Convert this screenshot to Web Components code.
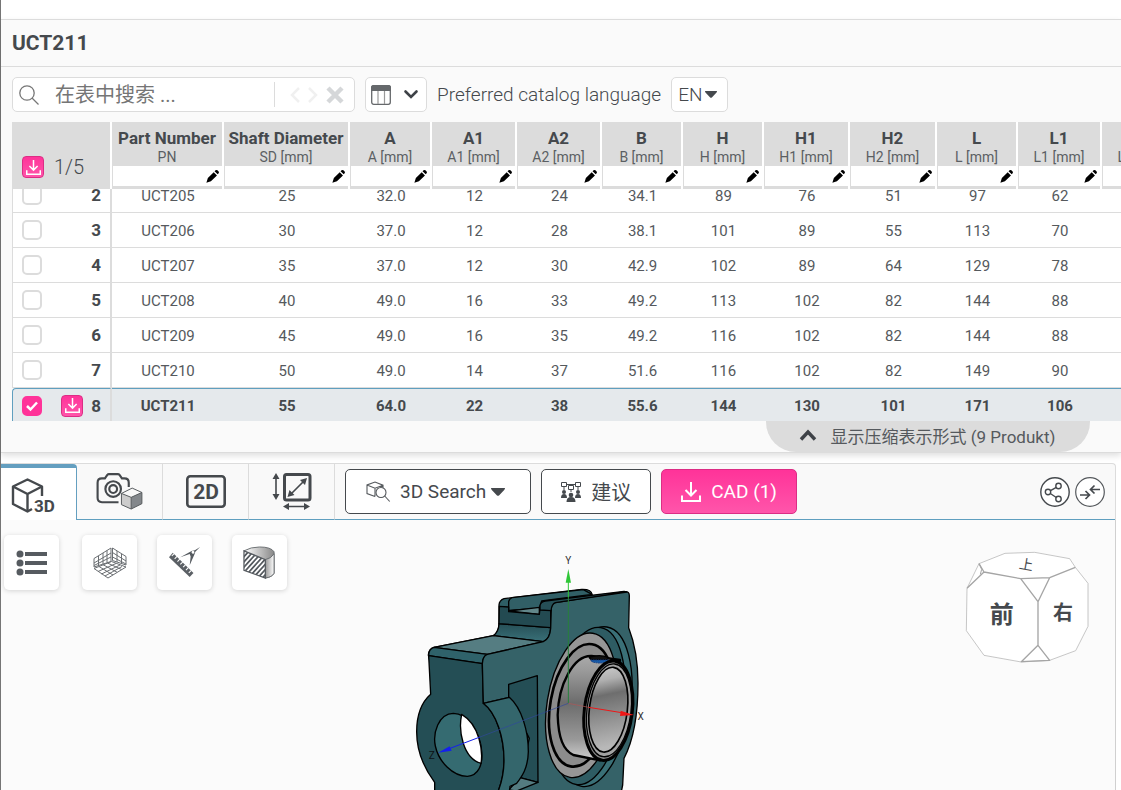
<!DOCTYPE html>
<html lang="zh-CN">
<head>
<meta charset="utf-8">
<meta name="viewport" content="width=device-width, initial-scale=1">
<title>UCT211</title>
<style>
html, body { height: 100%; }
body {
  margin: 0;
  background: #fff;
  color: #45494d;
  font-family: Roboto, "Noto Sans CJK SC", sans-serif;
  overflow: hidden;
}
</style>
</head>
<body>
<part-page>
  <part-panel heading="UCT211">
    <table-toolbar></table-toolbar>
    <part-table></part-table>
    <panel-toggle>显示压缩表示形式 (9 Produkt)</panel-toggle>
  </part-panel>
  <view-bar></view-bar>
  <model-stage></model-stage>
</part-page>

<script>
// Icons, shared by every component. [viewBox, markup]
const ICONS = {
  search: ['0 0 20 20', '<g fill="none" stroke="#777" stroke-width="1.3"><circle cx="8" cy="8" r="7.2"/><path d="M13 13l6.5 6.5"/></g>'],
  prev: ['0 0 10 18', '<path d="M9 2L2 9l7 7" fill="none" stroke="#f0f0f0" stroke-width="2.5"/>'],
  next: ['0 0 10 18', '<path d="M1 2l7 7-7 7" fill="none" stroke="#f0f0f0" stroke-width="2.5"/>'],
  clear: ['0 0 18 18', '<path d="M2 2l14 14M16 2L2 16" stroke="#d5d7d9" stroke-width="4.500"/>'],
  columns: ['0 0 20 20', '<rect x=".7" y=".7" width="18.6" height="18.6" rx="2" fill="#fff" stroke="#65686b" stroke-width="1.3"/><path d="M0 6V2.500Q0 0 2.500 0h15Q20 0 20 2.500V6z" fill="#65686b"/><path d="M7 6v13M13.500 6v13" stroke="#999" stroke-width="1.2"/>'],
  down: ['0 0 14 10', '<path d="M1.500 1.500L7 7l5.500-5.500" fill="none" stroke="#3e4247" stroke-width="2.600" stroke-linecap="round"/>'],
  up: ['0 0 18 12', '<path d="M2 10.500L9 3l7 7.500" fill="none" stroke="#3e4247" stroke-width="3.400"/>'],
  caret: ['0 0 14 8', '<path d="M0 0h14q0 1.200-.8 2L8 7.400q-1 .8-2 0L.8 2Q0 1.200 0 0z" fill="#45494d"/>'],
  download: ['0 0 20 20', '<path d="M10 0v13M4.500 8L10 13.500 15.500 8M1 13.500V19h18v-5.500" fill="none" stroke="#fff" stroke-width="2"/>'],
  pencil: ['0 0 14 14', '<path d="M8.300 2.300l3.500 3.500-6.500 6.400-4.900 1.600L2 8.700zM9.200 1.400L10.300.4q1-.8 2 0l1.300 1.300q.8.900 0 1.900l-1 1.100z"/>'],
  cube3d: ['0 0 44 36', '<g fill="none" stroke="#45494d" stroke-width="2.400" stroke-linejoin="round"><path d="M31 18V8.500L16.500 1.500 2 8.500V26l14.500 7.500L21 31"/><path d="M2 8.500L16.500 16 31 8.500M16.500 16v17"/></g><text x="23" y="34" font-size="17" font-weight="700" fill="#45494d">3D</text>'],
  camera: ['0 0 48 38', '<g fill="none" stroke="#45494d" stroke-width="2.200"><path d="M23 30H6q-4.500 0-4.500-4.500V10Q1.500 5.500 6 5.500h3L11.500 2q.6-.8 1.700-.8h9q1.200 0 1.800.8l2.500 3.500h2.500q4.500 0 4.500 4.500v4.500"/><circle cx="17.500" cy="16.500" r="8"/><circle cx="17.500" cy="16.500" r="4"/></g><path d="M26 21l11-5.500L47 20 36 25z" fill="#f7f7f7"/><path d="M26 21l10 4v12l-10-4.500z" fill="#ccc"/><path d="M36 25l11-5v11.500L36 37z" fill="#83878b"/><path d="M26 21l11-5.500L47 20v11.500L36 37l-10-4.500zM26 21l10 4 11-5M36 25v12" fill="none" stroke="#55595d"/>'],
  view2d: ['0 0 40 33', '<rect x="1.300" y="1.300" width="37.400" height="30.400" rx="3" fill="none" stroke="#45494d" stroke-width="2.600"/><text x="20" y="24" font-size="21" font-weight="700" text-anchor="middle" fill="#45494d">2D</text>'],
  dims: ['0 0 40 37', '<g fill="none" stroke="#45494d"><rect x="12.500" y="1.500" width="25.500" height="25.500" rx="2" stroke-width="3"/><path d="M17.500 22.500L33 7M4 5v18M16 33.500h19" stroke-width="1.600"/></g><path d="M35 5l-2 7-5-5zM15.500 24l2-7 5 5zM.5 6L4 0l3.500 6zM.5 21L4 27l3.500-6zM17 30l-6 3.500 6 3.500zM32 30l6 3.500-6 3.500z" fill="#45494d"/>'],
  search3d: ['0 0 24 22', '<g fill="none" stroke="#55595d" stroke-width="1.100"><path d="M9 15.500L1 12.500V4l8-3 8 3.200v3M1 4l8 3.200L17 4.200M9 7.200v8.300"/><circle cx="15" cy="11.500" r="5"/><path d="M18.700 15l5 5.500"/></g>'],
  people: ['0 0 20 20', '<g fill="none" stroke="#45494d"><path d="M.5.5h5v4h-5zM14.500.5h5v4h-5zM7.500 3.500h5v4h-5zM5.500 2.500h9M3 5v3M17 5v3M10 8v2"/></g><g fill="#45494d"><circle cx="3" cy="10" r="2"/><path d="M0 16q0-4 3-4t3 4z"/><circle cx="17" cy="10" r="2"/><path d="M14 16q0-4 3-4t3 4z"/><circle cx="10" cy="13" r="2.300"/><path d="M5.500 20q0-5 4.500-5t4.500 5z"/></g>'],
  share: ['0 0 30 30', '<circle cx="15" cy="15" r="14.200" fill="#fff" stroke="#45494d" stroke-width="1.400"/><g fill="none" stroke="#45494d" stroke-width="1.400"><circle cx="8" cy="15" r="2.700"/><circle cx="18.500" cy="9" r="2.700"/><circle cx="18.500" cy="22" r="2.700"/><path d="M10.500 13.700l5.800-3.300M10.300 16.500l6 4"/></g>'],
  collapse: ['0 0 30 30', '<circle cx="15" cy="15" r="14.300" fill="#fff" stroke="#55595d" stroke-width="1.200"/><path d="M5 18h9M10.500 14l4 4-4 4M25 12.500h-9M19.500 8.500l-4 4 4 4" fill="none" stroke="#45494d" stroke-width="1.700"/>'],
  list: ['0 0 32 26', '<g fill="#565b60"><circle cx="4" cy="4" r="3.500"/><circle cx="4" cy="13" r="3.500"/><circle cx="4" cy="22" r="3.500"/><path d="M9 2h22v4H9zM9 11h22v4H9zM9 20h22v4H9z"/></g>'],
  grid: ['0 0 34 32', '<g fill="none" stroke="#6a6e72"><path d="M1 11.500L18 1v13.500L1 20zM5.500 9v9.500M10 6v11M14 3.500v12M1 16L18 6M18 10L1 18.500M19.500 1L33 9.500V18l-13.500-4.500zM24 4v11M28.500 7v9.500M19.500 5.500L33 14M19.500 10L33 17"/><path d="M1 21.500L18.500 14.500 33 20 15 31zM6 19.500l14 8.500M10 17.700l14 7.500M14.500 16l14 6.500M5 24.500l18-8M8.500 27l18.500-9M12 29l17-9.500"/></g>'],
  measure: ['0 0 34 34', '<path d="M4 6l22 21.500-4 4.500L0 11z" fill="#5b6065"/><path d="M5.500 7l-2.500 2.500M8.500 10L6 12.500M11.500 13L9 15.500M14.500 16L12 18.500M17.500 19L15 21.500M20.500 22L18 24.500M23.500 25L21 27.500" stroke="#fff" stroke-width="1.100"/><path d="M33 0l-5.500 3.500-3 .5L12 11l10-3.500 1 2.500-1 9.500 5-11.500 1-3zM24 5.500a1.500 1.500 0 1 1 0 .1z" fill="#565b60" fill-rule="evenodd"/>'],
  section: ['0 0 34 34', '<defs><linearGradient id="sg"><stop stop-color="#fff"/><stop offset="1" stop-color="#888"/></linearGradient><linearGradient id="se"><stop stop-color="#999"/><stop offset="1" stop-color="#fff"/></linearGradient><pattern id="sh" width="3.600" height="3.600" patternUnits="userSpaceOnUse" patternTransform="rotate(42)"><path d="M0 0v4" stroke="#565b60" stroke-width="3.600"/></pattern></defs><path d="M1 5Q8 1 17 1q12 0 15 5v22q-2 4-9 5z" fill="url(#sg)" stroke="#6a6e72"/><path d="M23 14q6-1 9-6v20q-2 4-9 5z" fill="url(#se)" stroke="#6a6e72"/><path d="M1 5l22 9v19L1 25z" fill="#fff"/><path d="M1 5l22 9v19L1 25z" fill="url(#sh)" stroke="#565b60" stroke-width="1.300"/>']
};

class UiIcon extends HTMLElement {
  connectedCallback() {
    const [box, body] = ICONS[this.getAttribute('name')];
    const [, , w, h] = box.split(' ');
    const width = this.getAttribute('width') || w;
    const root = this.shadowRoot || this.attachShadow({ mode: 'open' });
    root.innerHTML = `
      <style>
        :host { display: inline-flex; flex: none; }
        svg { display: block; overflow: visible; }
      </style>
      <svg width="${width}" height="${Math.round(width * h / w)}" viewBox="${box}" aria-hidden="true">${body}</svg>`;
  }
}
customElements.define('ui-icon', UiIcon);

// Base for elements whose markup is static.
class ShadowElement extends HTMLElement {
  constructor() {
    super();
    const tpl = document.createElement('template');
    tpl.innerHTML = this.constructor.markup;
    this.attachShadow({ mode: 'open' }).appendChild(tpl.content.cloneNode(true));
  }
}

customElements.define('part-page', class extends ShadowElement {
  static markup = `
<style>
:host {
  display: flex;
  flex-direction: column;
  height: 100vh;
  box-sizing: border-box;
  padding-top: 19px;
  border-left: 1px solid #757575;
}
</style>
<slot></slot>`;
});

customElements.define('part-panel', class extends ShadowElement {
  static markup = `
<style>
:host {
  display: block;
  flex: none;
  background: #fafafa;
  border-top: 1px solid #dcdcdc;
  border-bottom: 1px solid #dcdcdc;
  box-shadow: 0 3px 6px rgba(0,0,0,0.12);
}
h1 {
  margin: 0;
  padding: 0 11px;
  font-size: 21px;
  line-height: 46px;
  font-weight: 700;
  border-bottom: 1px solid #dcdcdc;
}
</style>
<h1></h1>
<slot></slot>`;
  connectedCallback() {
    this.shadowRoot.querySelector('h1').textContent = this.getAttribute('heading');
  }
});

customElements.define('table-toolbar', class extends ShadowElement {
  static markup = `
<style>
:host {
  display: flex;
  align-items: center;
  gap: 10px;
  padding: 10px 11px;
}
.box {
  display: flex;
  align-items: center;
  box-sizing: border-box;
  height: 35px;
  border: 1px solid #dcdcdc;
  border-radius: 5px;
  background: #fff;
}
.search { width: 343px; padding: 0 10px 0 6px; }
input {
  flex: 1;
  min-width: 0;
  margin-left: 16px;
  padding: 0;
  border: 0;
  outline: 0;
  background: none;
  font: inherit;
  font-size: 20px;
  color: inherit;
}
input::placeholder { color: #757575; }
.steps {
  display: flex;
  align-items: center;
  gap: 8px;
  height: 25px;
  padding-left: 15px;
  border-left: 1px solid #dcdcdc;
}
button {
  display: flex;
  padding: 0;
  border: 0;
  background: none;
}
button.box { gap: 13px; width: 62px; padding: 0 5px; border: 1px solid #dcdcdc; background: #fff; }
label { font-size: 19px; font-weight: 300; }
.lang { position: relative; }
.lang ui-icon { position: absolute; right: 10px; pointer-events: none; }
select {
  appearance: none;
  width: 55px;
  height: 33px;
  padding: 0 6px;
  border: 0;
  background: none;
  color: inherit;
  font: inherit;
  font-size: 19px;
  font-weight: 300;
}
</style>
<div class="box search">
  <ui-icon name="search"></ui-icon>
  <input type="text" placeholder="在表中搜索 ..." aria-label="在表中搜索">
  <div class="steps">
    <button aria-label="prev"><ui-icon name="prev"></ui-icon></button>
    <button aria-label="next"><ui-icon name="next"></ui-icon></button>
    <button aria-label="clear"><ui-icon name="clear"></ui-icon></button>
  </div>
</div>
<button class="box" aria-label="columns"><ui-icon name="columns"></ui-icon><ui-icon name="down"></ui-icon></button>
<label for="lang">Preferred catalog language</label>
<div class="box lang">
  <select id="lang"><option>EN</option></select>
  <ui-icon name="caret" width="12"></ui-icon>
</div>`;
});

const COLUMNS = [
  ['Part Number', 'PN', 112], ['Shaft Diameter', 'SD [mm]', 126], ['A', 'A [mm]', 82],
  ['A1', 'A1 [mm]', 85], ['A2', 'A2 [mm]', 85], ['B', 'B [mm]', 81], ['H', 'H [mm]', 81],
  ['H1', 'H1 [mm]', 86], ['H2', 'H2 [mm]', 87], ['L', 'L [mm]', 81], ['L1', 'L1 [mm]', 84],
  ['L2', 'L2 [mm]', 84]
];
const ROWS = [
  [2, 'UCT205', '25', '32.0', '12', '24', '34.1', '89', '76', '51', '97', '62'],
  [3, 'UCT206', '30', '37.0', '12', '28', '38.1', '101', '89', '55', '113', '70'],
  [4, 'UCT207', '35', '37.0', '12', '30', '42.9', '102', '89', '64', '129', '78'],
  [5, 'UCT208', '40', '49.0', '16', '33', '49.2', '113', '102', '82', '144', '88'],
  [6, 'UCT209', '45', '49.0', '16', '35', '49.2', '116', '102', '82', '144', '88'],
  [7, 'UCT210', '50', '49.0', '14', '37', '51.6', '116', '102', '82', '149', '90'],
  [8, 'UCT211', '55', '64.0', '22', '38', '55.6', '144', '130', '101', '171', '106']
];
const SELECTED = 8;

customElements.define('part-table', class extends ShadowElement {
  static markup = `
<style>
:host {
  display: block;
  height: 299px;
  margin-left: 11px;
  overflow: auto;
  scrollbar-width: none;
}
table {
  table-layout: fixed;
  width: 0;
  border-collapse: separate;
  border-spacing: 0;
  font-size: 15px;
}
th, td { padding: 0; box-sizing: border-box; text-align: center; }
thead th {
  position: sticky;
  top: 0;
  z-index: 1;
  height: 67px;
  background: #dcdcdc;
  border-right: 2px solid #fff;
  vertical-align: bottom;
}
.name { font-size: 17px; line-height: 20px; font-weight: 700; white-space: nowrap; }
.unit { font-size: 14px; line-height: 18px; font-weight: 400; white-space: nowrap; color: #5b5f63; }
.filter { display: block; position: relative; margin: 0 0 3px 1px; }
.filter input {
  display: block;
  box-sizing: border-box;
  width: 100%;
  height: 20px;
  padding: 0 20px 0 4px;
  border: 0;
  font: inherit;
}
.filter ui-icon { position: absolute; right: 3px; top: 4px; color: #000; }
.count, .tools { display: flex; align-items: center; }
.count { gap: 10px; padding: 0 10px 11px; font-size: 20px; line-height: 22px; font-weight: 300; }
tbody th, tbody td { height: 35px; border-bottom: 1px solid #dcdcdc; background: #fff; }
tbody td { padding-top: 2px; color: #55595d; }
tbody tr.selected td { padding-top: 0; }
tbody th { border-left: 1px solid #dcdcdc; border-right: 2px solid #dcdcdc; font-size: 17px; }
.tools { justify-content: space-between; padding: 0 9px; line-height: 22px; }
.num { display: flex; gap: 8px; }
input[type=checkbox] {
  appearance: none;
  box-sizing: border-box;
  width: 20px;
  height: 20px;
  margin: 0;
  border: 2px solid #dcdcdc;
  border-radius: 5px;
  background: #fff;
}
input[type=checkbox]:checked {
  border-color: #ff3399;
  background: #ff3399;
}
.check { display: grid; align-items: center; justify-items: center; }
.check > * { grid-area: 1 / 1; }
.check svg { z-index: 0; pointer-events: none; }
.get {
  display: flex;
  align-items: center;
  justify-content: center;
  box-sizing: border-box;
  width: 22px;
  height: 22px;
  padding: 0;
  border: 1px solid #dc2d85;
  border-radius: 4px;
  background: linear-gradient(#ff3399, #ff55aa);
}
.selected th, .selected td {
  background: #e5e9ec;
  border-top: 1px solid #5f9fbf;
  font-weight: 700;
  color: #45494d;
}
.selected th { border-left-color: #5f9fbf; border-top-left-radius: 4px; }
</style>
<table>
  <colgroup></colgroup>
  <thead><tr></tr></thead>
  <tbody></tbody>
</table>`;
  connectedCallback() {
    const $ = s => this.shadowRoot.querySelector(s);
    const get = '<button class="get" aria-label="CAD"><ui-icon name="download" width="15"></ui-icon></button>';
    const tick = '<svg width="14" height="12" viewBox="0 0 14 12"><path d="M2 6l3.500 3.500L12 2.500" fill="none" stroke="#fff" stroke-width="2.500"/></svg>';
    $('colgroup').innerHTML = '<col style="width:100px">' +
      COLUMNS.map(c => `<col style="width:${c[2]}px">`).join('');
    $('thead tr').innerHTML = `<th><div class="count">${get}1/5</div></th>` +
      COLUMNS.map(([name, unit]) => `
        <th><div class="name">${name}</div><div class="unit">${unit}</div>
        <label class="filter"><input type="text" aria-label="${name}"><ui-icon name="pencil" width="13"></ui-icon></label></th>`).join('');
    $('tbody').innerHTML = ROWS.map(([n, ...cells]) => {
      const on = n === SELECTED;
      return `<tr${on ? ' class="selected"' : ''}>
        <th><div class="tools">
          <label class="check"><input type="checkbox" aria-label="${n}"${on ? ' checked' : ''}>${on ? tick : ''}</label>
          <span class="num">${on ? get : ''}${n}</span>
        </div></th>
        ${cells.map(c => `<td>${c}</td>`).join('')}<td></td></tr>`;
    }).join('');
    this.scrollTop = 11;
  }
});

customElements.define('panel-toggle', class extends ShadowElement {
  static markup = `
<style>
:host { display: flex; justify-content: flex-end; padding-right: 31px; }
button {
  display: flex;
  align-items: center;
  justify-content: center;
  gap: 14px;
  width: 324px;
  height: 31px;
  padding: 0 2px 3px 0;
  border: 0;
  border-radius: 0 0 30px 30px;
  background: #dcdcdc;
  color: #55595d;
  font: inherit;
  font-size: 17px;
}
</style>
<button><ui-icon name="up"></ui-icon><span><slot></slot></span></button>`;
});

customElements.define('view-bar', class extends ShadowElement {
  static markup = `
<style>
:host {
  display: flex;
  flex: none;
  box-sizing: border-box;
  height: 57px;
  margin: 10px 5px 0 0;
  border-top: 1px solid #dcdcdc;
  border-right: 1px solid #dcdcdc;
  border-top-right-radius: 4px;
  background: #f9f9f9;
}
button { font: inherit; color: inherit; }
.tab {
  display: flex;
  align-items: center;
  justify-content: center;
  box-sizing: border-box;
  width: 86px;
  padding: 0;
  border: 0;
  border-right: 1px solid #dcdcdc;
  border-bottom: 1px solid #5f9fbf;
  background: none;
}
.tab.active {
  width: 76px;
  justify-content: flex-start;
  padding: 3px 0 0 10px;
  border-top: 4px solid #649fc0;
  border-right: 1px solid #649fc0;
  border-bottom: 0;
  border-top-right-radius: 4px;
  background: #fff;
}
.actions {
  display: flex;
  flex: 1;
  align-items: center;
  gap: 10px;
  padding: 0 10px;
  border-bottom: 1px solid #5f9fbf;
}
.action {
  display: flex;
  align-items: center;
  justify-content: center;
  gap: 10px;
  box-sizing: border-box;
  height: 45px;
  padding: 0 19px;
  border: 1px solid #45494d;
  border-radius: 5px;
  background: #fff;
  font-size: 20px;
  font-weight: 400;
  white-space: nowrap;
}
.action.find { gap: 5px; padding: 0 25px 0 20px; font-size: 19px; }
.find span { padding-left: 5px; }
.action.cad {
  border-color: #dc2d85;
  background: linear-gradient(#ff3399, #ff55aa);
  color: #fff;
  font-size: 19px;
}
.round { display: flex; padding: 0; border: 0; background: none; }
.tools { display: flex; gap: 5px; margin-left: auto; }
</style>
<button class="tab active" aria-label="3D"><ui-icon name="cube3d"></ui-icon></button>
<button class="tab" aria-label="photo"><ui-icon name="camera" width="47"></ui-icon></button>
<button class="tab" aria-label="2D"><ui-icon name="view2d"></ui-icon></button>
<button class="tab" aria-label="size"><ui-icon name="dims"></ui-icon></button>
<div class="actions">
  <button class="action find"><ui-icon name="search3d"></ui-icon><span>3D Search</span><ui-icon name="caret"></ui-icon></button>
  <button class="action"><ui-icon name="people"></ui-icon><span>建议</span></button>
  <button class="action cad"><ui-icon name="download"></ui-icon><span>CAD (1)</span></button>
  <div class="tools">
    <button class="round" aria-label="share"><ui-icon name="share"></ui-icon></button>
    <button class="round" aria-label="collapse"><ui-icon name="collapse"></ui-icon></button>
  </div>
</div>`;
});

// Pillow block housing with its bearing insert, and the axis triad.
customElements.define('part-model', class extends ShadowElement {
  static markup = `
<style>
:host { display: block; width: 260px; }
svg { display: block; width: 100%; overflow: visible; }
</style>
<svg viewBox="0 0 780 735" role="img" aria-label="UCT211">
  <defs>
    <linearGradient id="steel" x1="0" y1="0" x2="0" y2="1">
      <stop offset="0" stop-color="#aaa"/><stop offset=".15" stop-color="#999"/>
      <stop offset=".45" stop-color="#6c6c6c"/><stop offset=".8" stop-color="#999"/><stop offset="1" stop-color="#d0d0d0"/>
    </linearGradient>
    <linearGradient id="bore" x1="0" y1="0" x2=".15" y2="1">
      <stop offset="0" stop-color="#d0d0d0"/><stop offset=".2" stop-color="#b0b0b0"/><stop offset=".38" stop-color="#6e6e6e"/>
      <stop offset=".6" stop-color="#888"/><stop offset="1" stop-color="#b8b8b8"/>
    </linearGradient>
    <linearGradient id="fillet" x1="0" y1="0" x2="0" y2="1">
      <stop offset="0" stop-color="#264f56"/><stop offset="1" stop-color="#397078"/>
    </linearGradient>
  </defs>
  <g stroke="#000" stroke-width="4" stroke-linejoin="round">
    <path d="M85 330Q86 312 102 307L280 272Q296 264 297 240V180Q298 166 312 161L545 133Q574 132 576 148L560 170 300 400 90 350z" fill="#2e5e65"/>
    <path d="M326 196V170Q328 161 336 158L550 134 576 148 425 168 418 190z" fill="#315f66"/>
    <path d="M326 198L418 187V208z" fill="#62878a"/>
    <path d="M297 236L452 248Q451 280 430 290L280 272Q296 260 297 236z" fill="url(#fillet)"/>
    <path d="M298 184L326 186V200L418 208 420 190 452 194V248L297 236z" fill="#234a51"/>
    <path d="M102 307L280 272 430 290 262 328z" fill="#557d82"/>
    <path d="M102 307L262 328Q248 336 247 356L86 332Q86 311 102 307z" fill="#2f626a"/>
    <path d="M86 332L247 356 250 475C290 505 312 580 312 645 312 690 300 725 294 740H104V712Q50 640 50 560 50 485 92 448z" fill="#244e55"/>
    <path d="M247 356Q248 333 262 328L430 290Q450 282 452 250L454 188Q455 176 466 173L675 140Q688 139 688 152L686 248Q714 320 714 415 714 560 672 640L668 720 664 740H330L386 560 328 457 250 475z" fill="#356268"/>
    <path d="M420 195V182Q422 170 436 168L672 139 680 141 466 173Q455 177 453 197z" fill="#264f56"/>
    <path d="M326 458V418L412 392 414 712 360 698 388 580z" fill="#244e55"/>
    <path d="M414 712L360 698 326 735 350 738z" fill="#547b80"/>
    <path d="M250 475L328 457C366 490 385 560 385 620 384 670 365 695 350 715L330 724 328 740H294C300 725 312 690 312 645 312 580 290 505 250 475z" fill="#34666c"/>
    <path d="M160 505C115 506 98 565 106 603 116 650 158 694 202 694 235 692 249 660 245 618 240 560 202 505 160 505z" fill="#356b71"/>
    <path d="M185 508C174 560 190 640 243 655 249 620 240 540 185 508z" fill="#fff"/>
    <ellipse cx="583" cy="485" rx="108" ry="242" transform="rotate(9 583 485)" fill="#3a7077"/>
    <ellipse cx="565" cy="483" rx="105" ry="238" transform="rotate(9 565 483)" fill="#2e5c63"/>
    <ellipse cx="544" cy="481" rx="103" ry="219" transform="rotate(9 544 481)" fill="#969696"/>
    <ellipse cx="544" cy="481" rx="93" ry="186" transform="rotate(10 544 481)" fill="#8c8c8c" stroke-width="8"/>
    <path d="M575 333C520 330 475 420 473 510 475 580 490 615 520 630L600 646 660 345z" fill="url(#steel)" stroke-width="7"/>
    <path d="M568 338q30-12 58 0l-4 6h-48z" fill="#111"/>
    <path d="M572 345h54l-5 6q-22 6-44 0z" fill="#175ba8" stroke="#1a3f80" stroke-width="3" stroke-dasharray="5 2"/>
    <ellipse cx="625" cy="497" rx="72" ry="150" transform="rotate(7 625 497)" fill="#888" stroke-width="9"/>
    <ellipse cx="627" cy="496" rx="66" ry="140" transform="rotate(7 627 496)" fill="#a3a3a3"/>
    <ellipse cx="625" cy="494" rx="57" ry="128" transform="rotate(7 625 494)" fill="url(#bore)" stroke-width="5"/>
  </g>
  <g fill="none" stroke-width="3">
    <path d="M505 158V475" stroke="#26813c"/><path d="M505 110v48" stroke="#2fc637"/>
    <path d="M505 475L566 487" stroke="#b45555" stroke-width="2"/><path d="M566 487L665 503" stroke="#ee1717"/>
    <path d="M505 475L240 576" stroke="#30489d" stroke-width="2"/><path d="M240 576L145 612" stroke="#1420ee"/>
  </g>
  <path d="M505 72l8 41h-16z" fill="#2fc637"/>
  <path d="M702 510l-42 3 2-16z" fill="#ee1717"/>
  <path d="M114 623l35-19 6 13z" fill="#1420ee"/>
  <g font-family="Roboto" font-size="30" fill="#333" text-anchor="middle">
    <text x="505" y="56">Y</text><text x="722" y="526">X</text><text x="95" y="643" fill="#0c1214">Z</text>
  </g>
</svg>`;
});

customElements.define('view-cube', class extends ShadowElement {
  static markup = `
<style>
:host { display: block; width: 128px; }
svg { display: block; width: 100%; }
</style>
<svg viewBox="40 255 384 345" role="img" aria-label="前">
  <path d="M52 370L88 296 166 265 255 262 360 281 377 307 415 355V484L378 557 300 586 215 591 103 571 50 497z" fill="#fff" stroke="#aaa" stroke-width="2"/>
  <g fill="none" stroke="#a5a5a5" stroke-width="4" stroke-linejoin="round">
    <path d="M88 296L103 321 213 341 300 338 377 307M103 321L52 370M213 341L265 410 300 338M265 410V541M265 541L215 590 300 586z"/>
    <path d="M88 296l8 17-4 15" stroke-width="3"/>
  </g>
  <g fill="#45494d" text-anchor="middle" font-family="Noto Sans CJK SC" font-weight="700">
    <text x="156" y="475" font-size="72">前</text>
    <text x="340" y="466" font-size="60">右</text>
    <text x="230" y="314" font-size="42" font-weight="400" transform="rotate(10 230 300)">上</text>
  </g>
</svg>`;
});

customElements.define('model-stage', class extends ShadowElement {
  static markup = `
<style>
:host {
  display: block;
  position: relative;
  flex: 1;
  min-height: 0;
  margin-right: 5px;
  border-right: 1px solid #d0d0d0;
  background: #fbfbfb;
  overflow: hidden;
}
.tools { display: flex; gap: 20px; padding: 15px 3px; }
.tools button {
  display: flex;
  align-items: center;
  justify-content: center;
  width: 55px;
  height: 55px;
  padding: 0;
  border: 0;
  border-radius: 5px;
  background: #fff;
  box-shadow: 0 1px 5px rgba(0,0,0,0.16);
}
.tools button:first-child { margin-right: 3px; }
/* the model and the cube float over the canvas */
part-model { position: absolute; left: calc(50% - 158px); top: 25px; }
view-cube { position: absolute; right: 24px; top: 30px; }
</style>
<part-model></part-model>
<div class="tools">
  <button aria-label="list"><ui-icon name="list"></ui-icon></button>
  <button aria-label="grid"><ui-icon name="grid"></ui-icon></button>
  <button aria-label="measure"><ui-icon name="measure" width="32"></ui-icon></button>
  <button aria-label="section"><ui-icon name="section" width="33"></ui-icon></button>
</div>
<view-cube></view-cube>`;
});
</script>
</body>
</html>
